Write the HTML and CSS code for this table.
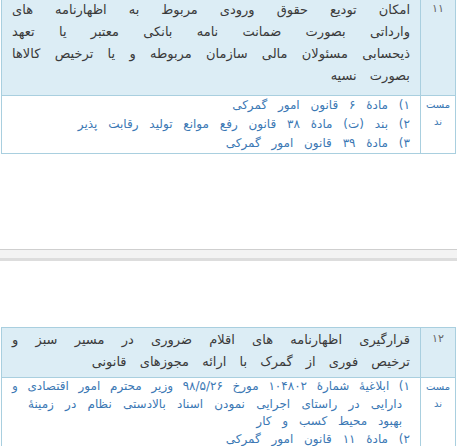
FILE: index.html
```html
<!DOCTYPE html>
<html lang="fa" dir="rtl">
<head>
<meta charset="utf-8">
<link rel="stylesheet" href="styles.css">
</head>
<body>
<div class="page">
  <table class="item first">
    <tr class="head">
      <td class="num">۱۱</td>
      <td class="title">
        <div class="jl">امکان توديع حقوق ورودی مربوط به اظهارنامه های</div>
        <div class="jl">وارداتی بصورت ضمانت نامه بانکی معتبر یا تعهد</div>
        <div class="jl">ذیحسابی مسئولان مالی سازمان مربوطه و یا ترخیص کالاها</div>
        <div class="rl">بصورت نسیه</div>
      </td>
    </tr>
    <tr class="body">
      <td class="num ref"><span>مست</span><span>ند</span></td>
      <td class="refs">
        <div class="rl">۱) مادهٔ ۶ قانون امور گمرکی</div>
        <div class="rl">۲) بند (ت) مادهٔ ۳۸ قانون رفع موانع تولید رقابت پذیر</div>
        <div class="rl">۳) مادهٔ ۳۹ قانون امور گمرکی</div>
      </td>
    </tr>
  </table>

  <div class="pagebreak"></div>

  <table class="item">
    <tr class="head">
      <td class="num">۱۲</td>
      <td class="title">
        <div class="jl">قرارگیری اظهارنامه های اقلام ضروری در مسیر سبز و</div>
        <div class="rl">ترخیص فوری از گمرک با ارائه مجوزهای قانونی</div>
      </td>
    </tr>
    <tr class="body">
      <td class="num ref"><span>مست</span><span>ند</span></td>
      <td class="refs tight">
        <div class="jl">۱) ابلاغیهٔ شمارهٔ ۱۰۴۸۰۲ مورخ ۹۸/۵/۲۶ وزیر محترم امور اقتصادی و</div>
        <div class="jl indent wide">دارایی در راستای اجرایی نمودن اسناد بالادستی نظام در زمینهٔ</div>
        <div class="rl indent">بهبود محیط کسب و کار</div>
        <div class="rl">۲) مادهٔ ۱۱ قانون امور گمرکی</div>
      </td>
    </tr>
  </table>
</div>
</body>
</html>
```
FILE: styles.css
```css
html, body {
  margin: 0;
  padding: 0;
  background: #ffffff;
}

.page {
  font-family: "DejaVu Sans", sans-serif;
  overflow: hidden;
  height: 446px;
}

.item {
  border-collapse: collapse;
  width: 455px;
  margin-right: 1px;
  margin-left: 2px;
  table-layout: fixed;
}

.item.first {
  margin-top: -3px;
}

.item td {
  border: 1px solid #a9cfdf;
  vertical-align: top;
}

.item td.num {
  width: 34px;
  text-align: center;
  padding: 0;
}

.head td {
  background: #dcedf5;
}

.head .num {
  font-size: 11px;
  line-height: 22px;
  color: #666666;
  padding-top: 1px;
}

.title {
  padding: 1px 10px 4px 10px;
  font-size: 13px;
  line-height: 22px;
  word-spacing: 9px;
  color: #3a3a3a;
}

.first .title {
  padding-bottom: 8px;
}

.body td {
  background: #ffffff;
}

.refs {
  padding: 0 10px;
  font-size: 12px;
  line-height: 19px;
  word-spacing: 7px;
  color: #3b78b4;
}

.refs.tight {
  line-height: 17.5px;
}

.num.ref {
  font-size: 10px;
  line-height: 17px;
  color: #3b78b4;
  padding-top: 2px;
}

.num.ref span {
  display: block;
}

.jl {
  white-space: nowrap;
  word-spacing: 0;
  text-align: justify;
  text-align-last: justify;
}

.rl {
  white-space: nowrap;
  text-align: right;
}

.indent {
  padding-right: 8px;
}

.indent.wide {
  padding-left: 16px;
}

.pagebreak {
  height: 8px;
  margin: 95px 0 66px 0;
  background: #f3f3f3;
  border-top: 1px solid #cfcfcf;
  border-bottom: 3px solid #dddddd;
}
```
